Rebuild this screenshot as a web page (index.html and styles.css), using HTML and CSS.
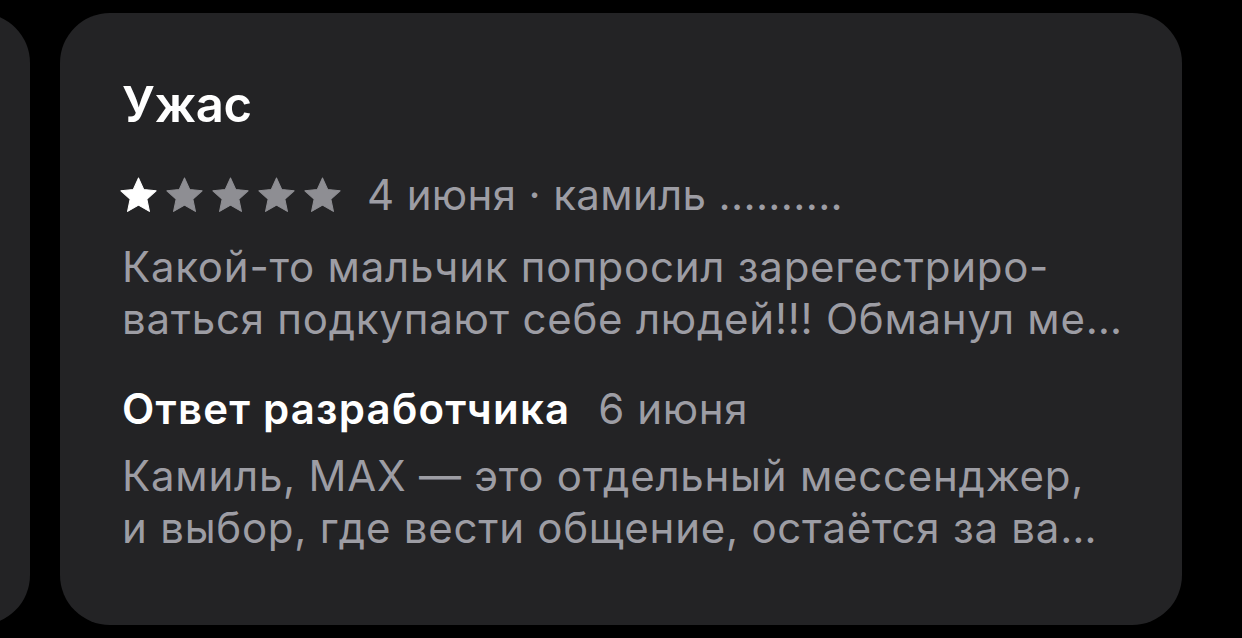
FILE: index.html
```html
<!DOCTYPE html>
<html lang="ru">
<head>
<meta charset="utf-8">
<link rel="stylesheet" href="styles.css">
</head>
<body>
<div class="row">
  <div class="card card-prev"></div>
  <div class="card card-main">
    <div class="title">Ужас</div>
    <div class="meta">
      <div class="stars">
        <svg class="star on" viewBox="0 0 24 24"><path d="M12 1.8l3.05 6.65 7.25.8-5.4 4.9 1.5 7.15L12 17.65 5.6 21.3l1.5-7.15-5.4-4.9 7.25-.8z" stroke-linejoin="round"/></svg>
        <svg class="star" viewBox="0 0 24 24"><path d="M12 1.8l3.05 6.65 7.25.8-5.4 4.9 1.5 7.15L12 17.65 5.6 21.3l1.5-7.15-5.4-4.9 7.25-.8z" stroke-linejoin="round"/></svg>
        <svg class="star" viewBox="0 0 24 24"><path d="M12 1.8l3.05 6.65 7.25.8-5.4 4.9 1.5 7.15L12 17.65 5.6 21.3l1.5-7.15-5.4-4.9 7.25-.8z" stroke-linejoin="round"/></svg>
        <svg class="star" viewBox="0 0 24 24"><path d="M12 1.8l3.05 6.65 7.25.8-5.4 4.9 1.5 7.15L12 17.65 5.6 21.3l1.5-7.15-5.4-4.9 7.25-.8z" stroke-linejoin="round"/></svg>
        <svg class="star" viewBox="0 0 24 24"><path d="M12 1.8l3.05 6.65 7.25.8-5.4 4.9 1.5 7.15L12 17.65 5.6 21.3l1.5-7.15-5.4-4.9 7.25-.8z" stroke-linejoin="round"/></svg>
      </div>
      <span class="meta-text">4 июня · камиль ..........</span>
    </div>
    <div class="body review">
      <div class="line">Какой-то мальчик попросил зарегестриро-</div>
      <div class="line">ваться подкупают себе людей!!! Обманул ме…</div>
    </div>
    <div class="dev-head">
      <span class="dev-title">Ответ разработчика</span>
      <span class="dev-date">6 июня</span>
    </div>
    <div class="body answer">
      <div class="line">Камиль, MAX — это отдельный мессенджер,</div>
      <div class="line">и выбор, где вести общение, остаётся за ва…</div>
    </div>
  </div>
</div>
</body>
</html>
```
FILE: styles.css
```css
html, body {
  margin: 0;
  padding: 0;
  background: #000;
  width: 1242px;
  height: 638px;
  overflow: hidden;
}
body {
  font-family: Inter, "Noto Sans", sans-serif;
  color: #fff;
}
.row {
  display: flex;
  gap: 30px;
  padding-top: 13px;
  margin-left: -70px;
}
.card {
  background: #232325;
  border-radius: 50px;
  height: 612px;
  box-sizing: border-box;
  flex: none;
}
.card-prev {
  width: 100px;
}
.card-main {
  width: 1122px;
  padding: 63px 40px 0 62px;
}
.title {
  font-size: 49px;
  font-weight: 600;
  line-height: 58px;
  letter-spacing: -0.3px;
}
.meta {
  display: flex;
  align-items: flex-start;
  margin-top: 39px;
  height: 46px;
}
.stars {
  display: flex;
  gap: 5px;
  margin-top: 2px;
  margin-left: -4px;
}
.star {
  width: 41px;
  height: 41px;
  fill: #8e8e93;
  stroke: #8e8e93;
  stroke-width: 0.6;
}
.star.on {
  fill: #fff;
  stroke: #fff;
}
.meta-text {
  margin-left: 24px;
  font-size: 42px;
  line-height: 44px;
  letter-spacing: 0.35px;
  color: #9d9da4;
}
.body {
  color: #9d9da4;
  font-size: 42px;
  line-height: 52px;
  letter-spacing: 0.75px;
}
.review {
  margin-top: 22px;
}
.dev-head {
  margin-top: 38px;
  font-size: 42px;
  line-height: 52px;
  display: flex;
  gap: 28px;
}
.dev-title {
  font-weight: 600;
  letter-spacing: 1.2px;
}
.dev-date {
  color: #9d9da4;
  letter-spacing: 0.6px;
}
.answer {
  margin-top: 15px;
}
.line {
  white-space: nowrap;
}
```
